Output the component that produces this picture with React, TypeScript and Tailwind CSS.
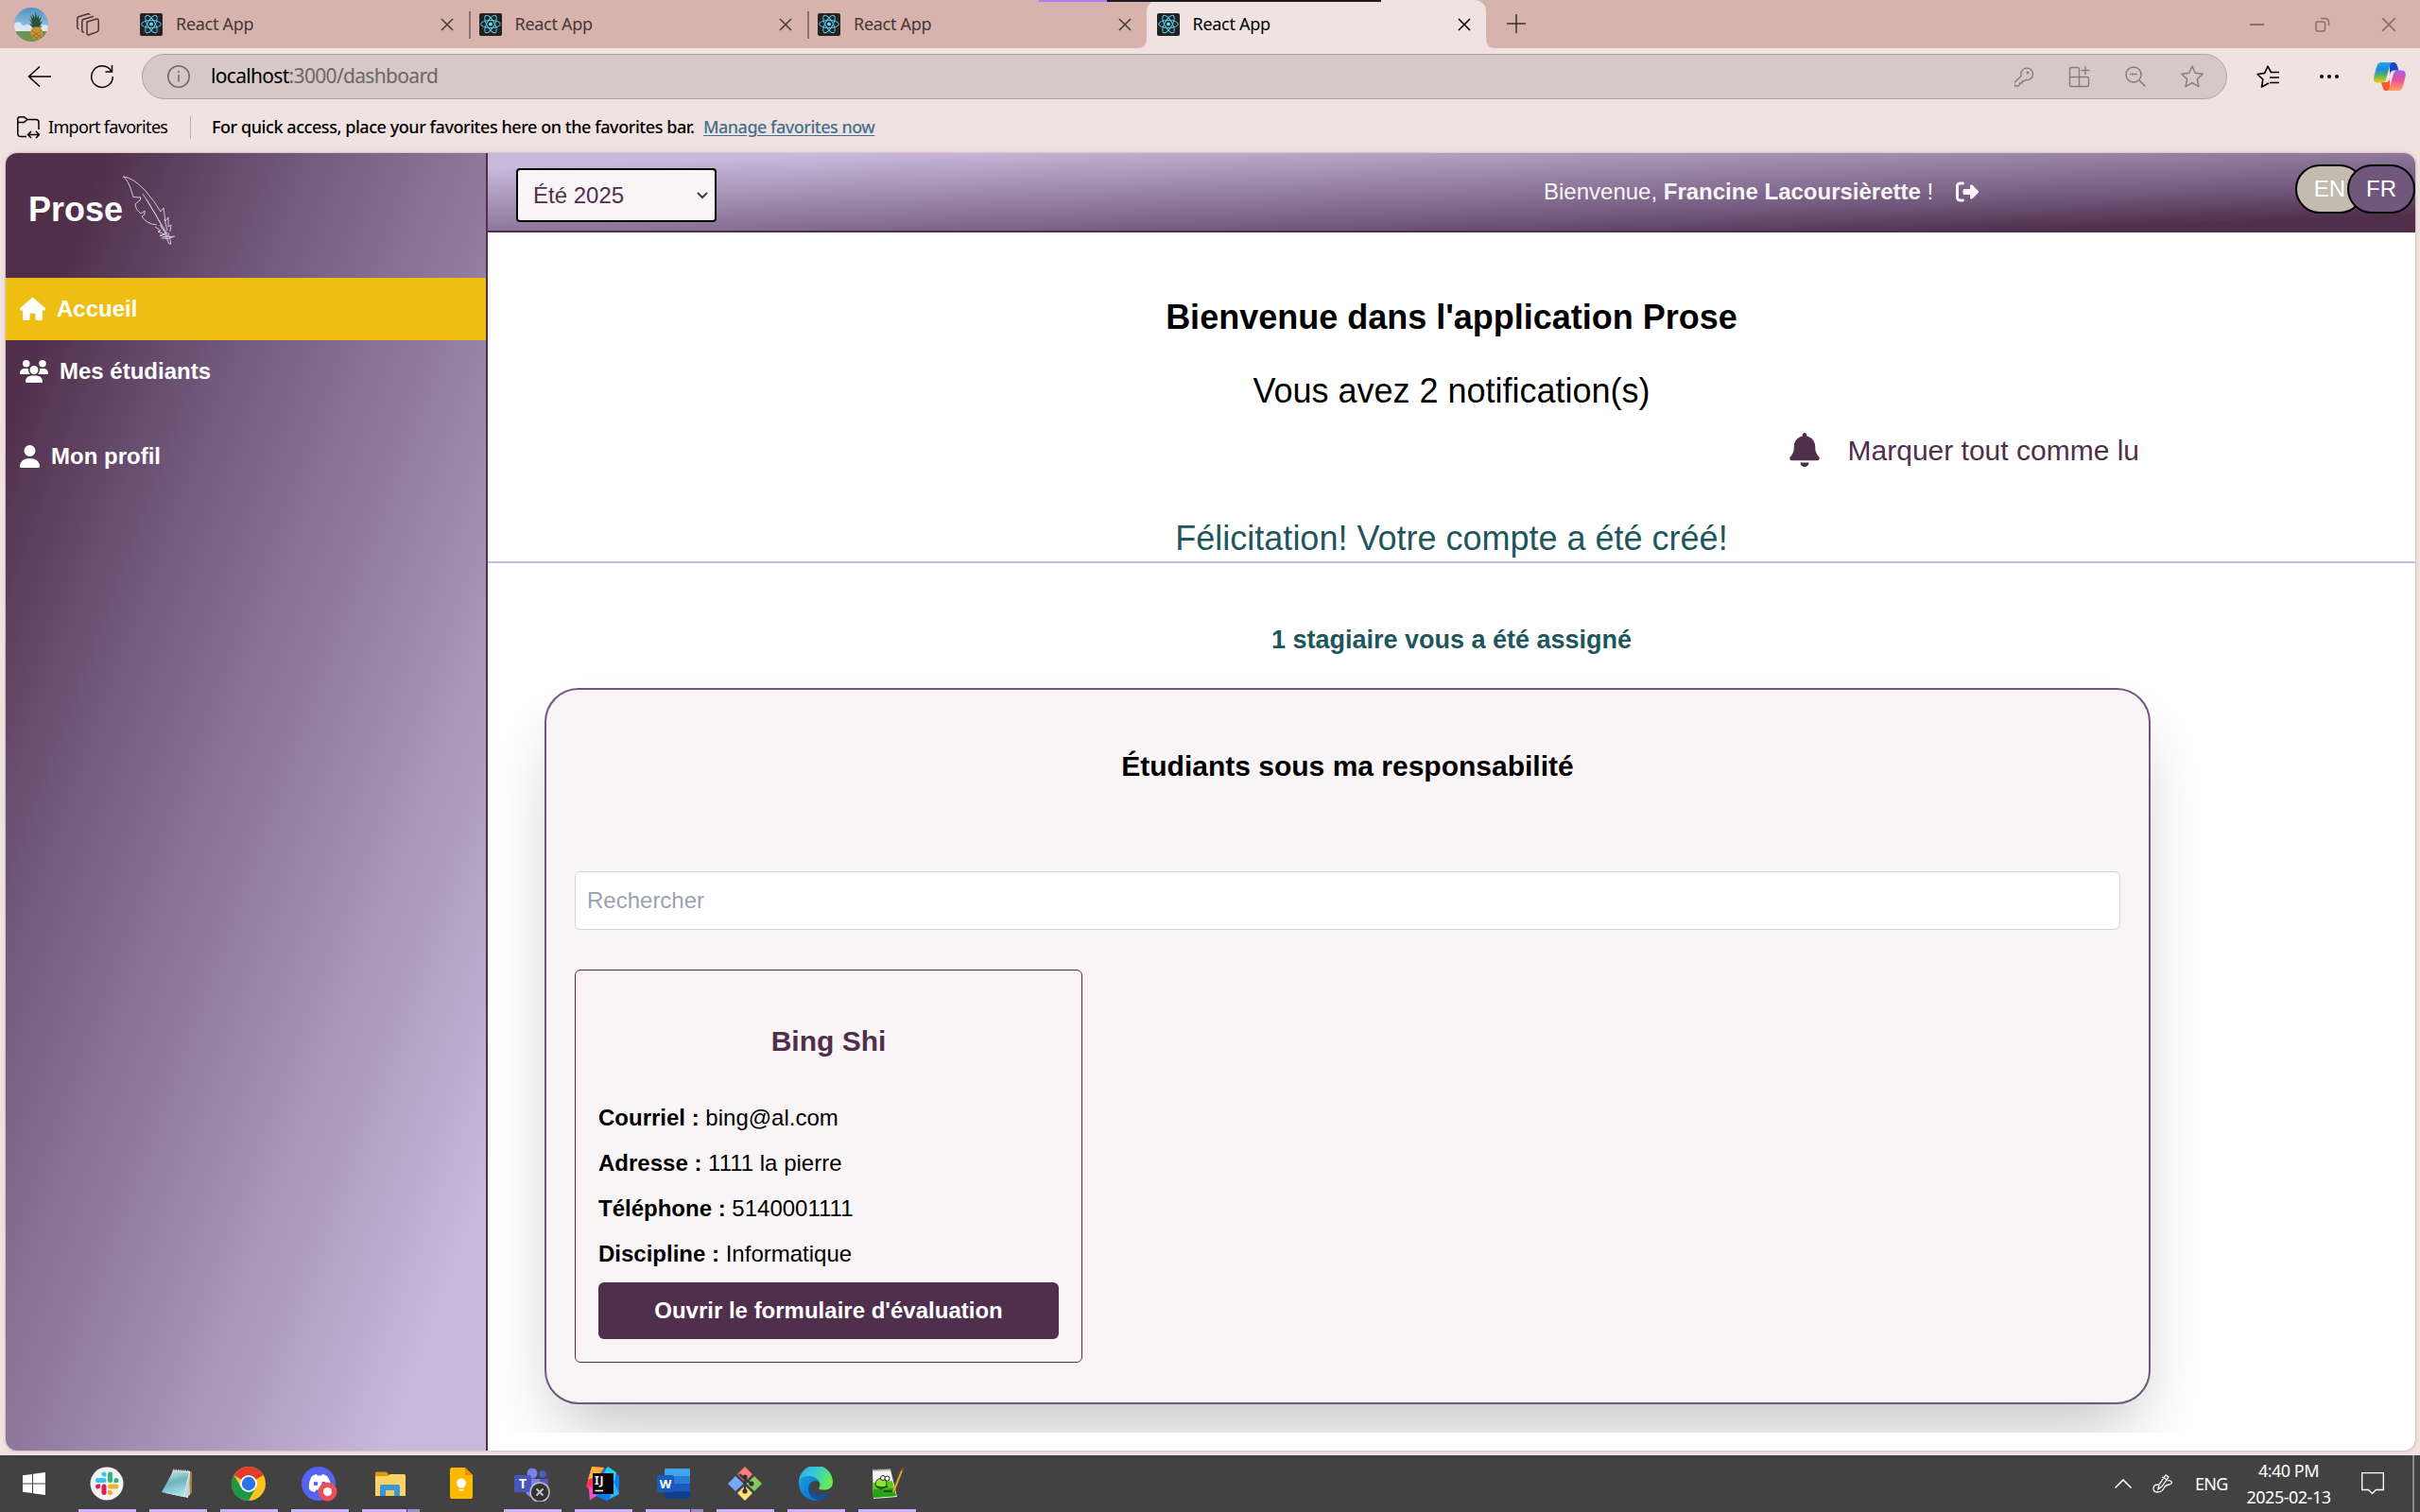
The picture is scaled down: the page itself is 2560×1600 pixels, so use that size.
import React from "react";
import { FaHouse, FaUsers, FaUser, FaBell, FaRightFromBracket } from "react-icons/fa6";

const TABS = [
  { title: "React App", active: false },
  { title: "React App", active: false },
  { title: "React App", active: false },
  { title: "React App", active: true },
];

function ReactFavicon() {
  return (
    <svg className="size-6 shrink-0" viewBox="0 0 24 24" fill="none">
      <rect width="24" height="24" rx="2" fill="#222222" />
      <g stroke="#5ccfee" strokeWidth="1">
        <ellipse cx="12" cy="11.5" rx="10.4" ry="4" />
        <ellipse cx="12" cy="11.5" rx="10.4" ry="4" transform="rotate(60 12 11.5)" />
        <ellipse cx="12" cy="11.5" rx="10.4" ry="4" transform="rotate(120 12 11.5)" />
      </g>
      <circle cx="12" cy="11.5" r="2" fill="#61dafb" />
    </svg>
  );
}

function Avatar() {
  return (
    <svg className="size-9 shrink-0" viewBox="0 0 36 36">
      <defs>
        <clipPath id="av">
          <circle cx="18" cy="18" r="18" />
        </clipPath>
        <linearGradient id="sky" x1="0" y1="0" x2="0" y2="1">
          <stop offset="0" stopColor="#4f93c6" />
          <stop offset="0.7" stopColor="#a5cbe4" />
        </linearGradient>
      </defs>
      <g clipPath="url(#av)">
        <rect width="36" height="36" fill="url(#sky)" />
        <path d="M0 18c3-4 6-3 8 0s5-2 9 1 10-3 19 0v7H0z" fill="#dbe8f1" />
        <rect y="25" width="36" height="11" fill="#6d9350" />
        <path
          d="M20 22l-4-5 3 1-3-6 3 3-2-7 3 4-1-6 3 5 .5-7 2 7 2-4-.5 6 3-4-2 7 3-2-3 6 3-1-4 4z"
          fill="#2b5140"
        />
        <rect x="17.500" y="20.500" width="12.500" height="13" rx="5" fill="#c9953a" />
        <path d="M18 24l11 8M18 29l7 4M29 24l-11 8M29 29l-7 4" stroke="#8d6420" strokeWidth=".8" />
      </g>
    </svg>
  );
}

function CloseX({ className }: { className: string }) {
  return (
    <svg className={className} viewBox="0 0 14 14" fill="none" stroke="currentColor" strokeWidth="1.5">
      <path d="M1 1l12 12M13 1L1 13" />
    </svg>
  );
}

function TabStrip() {
  return (
    <div className="relative flex h-[51px] bg-[#d8b2ac] text-[#453835]">
      <div className="flex w-[137px] items-center pl-[15px]">
        <Avatar />
        <svg className="ml-[30px] size-6" viewBox="0 0 24 24" fill="none" stroke="currentColor" strokeWidth="1.5">
          <path d="M10.5 9.3l10-3.1q2.7-.6 2.7 1.8v9.5q0 1.5-1.3 2.1l-8.5 3.2q-2.4.5-2.4-1.7V11q0-1.200.7-1.700z" />
          <path d="M8 20q-2.200.2-2.200-1.700V8.500q0-1.400 1.400-2L18 3.200" />
          <path d="M2.600 16.800Q.8 16.500.8 14.700V5.700q0-1.500 1.400-2L12 .8q1.600-.3 2 .9" />
        </svg>
      </div>
      {TABS.map((tab, i) => (
        <div
          key={i}
          className={
            tab.active
              ? "relative flex w-[359px] items-center rounded-t-xl bg-[#f0e2e0] pl-[11px] text-black"
              : "relative flex w-[358.5px] items-center pl-[11px]"
          }
        >
          {tab.active && (
            <>
              <svg className="absolute bottom-0 -left-2.5 size-2.5" viewBox="0 0 10 10">
                <path d="M10 0v10H0Q10 10 10 0z" fill="#f0e2e0" />
              </svg>
              <svg className="absolute -right-2.5 bottom-0 size-2.5" viewBox="0 0 10 10">
                <path d="M0 0v10h10Q0 10 0 0z" fill="#f0e2e0" />
              </svg>
            </>
          )}
          <ReactFavicon />
          <span className="ml-[14px] text-[18px] tracking-[-0.3px]">{tab.title}</span>
          <CloseX className="mr-[16px] ml-auto size-[14px]" />
          {i < 2 && <span className="absolute top-3 right-[-2px] h-[29px] w-0.5 bg-[#8d7370]" />}
        </div>
      ))}
      <svg className="mt-[15px] ml-[22px] size-5" viewBox="0 0 20 20" stroke="#3a2f2d" strokeWidth="1.500">
        <path d="M10 0v20M0 10h20" />
      </svg>
      <div className="mr-[25px] ml-auto flex items-center gap-[54px] text-[#8a6f6b]">
        <span className="h-0.5 w-[15px] bg-[#8a6f6b]" />
        <svg className="size-4" viewBox="0 0 16 16" fill="none" stroke="currentColor" strokeWidth="1.500">
          <rect x="1" y="5" width="9.500" height="10" rx="2" />
          <path d="M6 1.500h4q4.500 0 4.500 4.500v3" />
        </svg>
        <CloseX className="size-4" />
      </div>
      <div className="absolute top-0 left-[1099px] flex h-0.5">
        <span className="w-[72px] bg-[#ae7df5]" />
        <span className="w-[290px] bg-[#1f1b1d]" />
      </div>
    </div>
  );
}

function Copilot() {
  return (
    <svg className="h-[30px] w-[34px]" viewBox="0 0 34 30">
      <defs>
        <linearGradient id="cpa" x1="0" y1="0" x2="0" y2="1">
          <stop offset="0" stopColor="#22a8f0" />
          <stop offset="0.35" stopColor="#1e88e0" />
          <stop offset="0.65" stopColor="#55b85c" />
          <stop offset="1" stopColor="#f7c90c" />
        </linearGradient>
        <linearGradient id="cpb" x1="0" y1="0" x2="0" y2="1">
          <stop offset="0" stopColor="#a45bf0" />
          <stop offset="0.5" stopColor="#ee5391" />
          <stop offset="1" stopColor="#ffa35c" />
        </linearGradient>
      </defs>
      <path d="M17 0h4q3 0 4 4l1.500 4.500H22q-4 0-5 4z" fill="#1447c4" />
      <path d="M17 30h-4q-3 0-3.500-4L8 21h5q3 0 4-4z" fill="#f4592f" />
      <path d="M8 0h13q-3 0-4 4l-4 14q-1 3.500-4 3.500H4Q-1.500 21.500.5 14L3 5q1.400-5 5-5z" fill="url(#cpa)" />
      <path d="M26 30H13q3 0 4-4l4-14q1-3.500 4-3.500h4.500q5.500 0 4 7L31 25q-1.400 5-5 5z" fill="url(#cpb)" />
    </svg>
  );
}

function AddressBar() {
  return (
    <div className="flex h-[60px] items-center pl-[29px] text-black">
      <svg className="h-6 w-[26px]" viewBox="0 0 26 24" fill="none" stroke="currentColor" strokeWidth="1.500">
        <path d="M25 12H2M13 1.500L1.500 12 13 22.500" />
      </svg>
      <svg className="ml-[40px] size-[26px]" viewBox="0 0 26 26" fill="none" stroke="currentColor" strokeWidth="1.500">
        <path d="M22.500 7A11.300 11.300 0 1 0 24.300 13M23.500 1v7h-7" />
      </svg>
      <div className="ml-[29px] flex h-12 w-[2206px] items-center rounded-full border border-[#b0a3a1] bg-[#d6c8c6] pr-6 pl-[26px] text-[#6d6664]">
        <svg className="size-6" viewBox="0 0 24 24" fill="none" stroke="currentColor" strokeWidth="1.500">
          <circle cx="12" cy="12" r="11.200" />
          <path d="M12 10v7.500M12 6v2" />
        </svg>
        <span className="ml-[22px] text-[21px] tracking-[-0.68px]">
          <span className="text-black">localhost</span>:3000/dashboard
        </span>
        <div className="ml-auto flex items-center gap-[37px] text-[#857c7a]">
          <svg className="-mr-px size-[21px]" viewBox="0 0 21 21" fill="none" stroke="currentColor" strokeWidth="1.300">
            <path
              d="M1 16.500L8.200 9.300a6.300 6.300 0 1 1 4.600 4.200L11 15H9v2H6.500v1.500L5 20H1z"
              strokeLinejoin="round"
              transform="translate(-1 0)"
            />
            <circle cx="14" cy="6" r=".8" fill="currentColor" />
          </svg>
          <svg className="size-[23px]" viewBox="0 0 23 23" fill="none" stroke="currentColor" strokeWidth="1.400">
            <path d="M11.500 11.500V3q0-1.500-1.500-1.500H3Q1.500 1.500 1.500 3v17q0 1.500 1.500 1.500h17q1.500 0 1.500-1.500v-7q0-1.500-1.500-1.500zM1.500 11.500h10v10M18 0v9M13.500 4.500h9" />
          </svg>
          <svg className="size-[22px]" viewBox="0 0 22 22" fill="none" stroke="currentColor" strokeWidth="1.500">
            <circle cx="9" cy="9" r="8" />
            <path d="M15 15l6.500 6.500M5 8.500h8" />
          </svg>
          <svg className="size-6" viewBox="0 0 24 24" fill="none" stroke="currentColor" strokeWidth="1.400">
            <path
              d="M12 1l3.200 7.300 8 .9-5.900 5.500 1.600 7.900L12 18.700l-6.900 3.900 1.600-7.900L.8 9.200l8-.9z"
              strokeLinejoin="round"
            />
          </svg>
        </div>
      </div>
      <svg className="ml-[31px] size-6" viewBox="0 0 24 24" fill="none" stroke="currentColor" strokeWidth="1.600">
        <path
          d="M13 19l-7.500 4 1.300-8L1 9.500l7.700-1.100L12 1.200l3.400 6.300h8.600M14 13h10M14 18.500h10"
          strokeLinejoin="round"
        />
      </svg>
      <svg className="ml-[43px] h-1 w-5" viewBox="0 0 20 4">
        <circle cx="2" cy="2" r="2" />
        <circle cx="10" cy="2" r="2" />
        <circle cx="18" cy="2" r="2" />
      </svg>
      <div className="ml-[37px]">
        <Copilot />
      </div>
    </div>
  );
}

function FavoritesBar() {
  return (
    <div className="flex h-[51px] items-center pb-1 pl-[18px] text-[18px] text-black">
      <svg className="size-6" viewBox="0 0 24 24" fill="none" stroke="currentColor" strokeWidth="1.500">
        <path d="M10 21.500H4Q.8 21.500.8 18.500V3Q.8.800 3 .8h4.500L11 3.500h9q3 0 3 3V14M.8 6.500h6.500L11 3.500" />
        <path d="M12 19.500h11M15 16l-3.500 3.500L15 23M20 16l3.500 3.500L20 23" />
      </svg>
      <span className="ml-[9px] w-[126px] whitespace-nowrap tracking-[-0.68px]">Import favorites</span>
      <span className="ml-[24px] h-6 w-px bg-[#b8acab]" />
      <span className="ml-[22px] w-[512px] whitespace-nowrap font-medium tracking-[-0.440px]">
        For quick access, place your favorites here on the favorites bar.
      </span>
      <span className="ml-2 whitespace-nowrap font-medium tracking-[-0.5px] text-[#44708f] underline underline-offset-2">
        Manage favorites now
      </span>
    </div>
  );
}

function Feather() {
  return (
    <svg
      className="absolute top-6 left-[123px] h-[74px] w-[58px]"
      viewBox="0 0 58 74"
      fill="none"
      stroke="#e0d6e4"
      strokeWidth="0.9"
      strokeLinejoin="round"
    >
      <path d="M2 1q5 5 7 12l3 9.500 8 .5-1 3-5 4q0 6 6 10l4-3v4l-3 2q5 8 16 9" />
      <path d="M1 .8Q12 2 25 16q10 12 16 22l3-4 2 14 3-4v10l3-2-1 7" />
      <path d="M22 19q14 20 26 46M26 25q10 18 22 36" strokeWidth=".8" />
      <path d="M35 54l6 4-3 1 7 3-5 1q5 3 15 1M42 66q8 2 14-2M45 61l5 11h2l-3-12M40 52l9 12M45 46l3 12" />
    </svg>
  );
}

const NAV = [
  { label: "Accueil", icon: <FaHouse className="h-6 w-[27px]" />, cls: "bg-[#eebf12]" },
  { label: "Mes étudiants", icon: <FaUsers className="h-6 w-[30px]" />, cls: "" },
  { label: "Mon profil", icon: <FaUser className="h-6 w-[21px]" />, cls: "mt-6" },
];

function Sidebar() {
  return (
    <aside className="w-[510px] shrink-0 border-r-2 border-[#502f4c] bg-[linear-gradient(to_bottom_right,#502f4a_10%,#70587c_30%,#c8b8db_90%)] text-white">
      <div className="relative h-[132px] pt-9 pl-6">
        <span className="text-[36px] leading-[48px] font-bold">Prose</span>
        <Feather />
      </div>
      <nav>
        {NAV.map((item) => (
          <a key={item.label} className={`flex h-[66px] items-center gap-3 pl-[15px] text-[24px] font-bold ${item.cls}`}>
            {item.icon}
            {item.label}
          </a>
        ))}
      </nav>
    </aside>
  );
}

function Header() {
  return (
    <header className="flex h-[84px] border-b-2 border-[#502f4c] bg-[linear-gradient(to_top_left,#502f4a_10%,#70587c_30%,#c8b8db_90%)] text-[24px]">
      <div className="mt-4 ml-[30px] flex h-[57px] w-[212px] items-center justify-between rounded-[4px] border-2 border-black bg-[#f9f4f6] pr-[7px] pl-[16px] text-[#502f4c]">
        Été 2025
        <svg className="h-2 w-3" viewBox="0 0 12 8" fill="none" stroke="currentColor" strokeWidth="2">
          <path d="M1 1l5 5 5-5" />
        </svg>
      </div>
      <div className="ml-[875px] flex h-[82px] items-center whitespace-pre text-[#f9f4f6]">
        Bienvenue, <b>Francine Lacoursièrette</b> !
        <FaRightFromBracket className="ml-6 size-6" />
      </div>
      <div className="mt-3 ml-auto flex text-white">
        <span className="flex h-[52px] items-center rounded-full border-2 border-black bg-[#c4bbb0] px-[18px]">EN</span>
        <span className="z-10 -ml-[18px] flex h-[52px] items-center rounded-full border-2 border-black bg-[#70587c] px-[18px]">
          FR
        </span>
      </div>
    </header>
  );
}

const DETAILS = [
  ["Courriel :", "bing@al.com"],
  ["Adresse :", "1111 la pierre"],
  ["Téléphone :", "5140001111"],
  ["Discipline :", "Informatique"],
];

function StudentCard() {
  return (
    <div className="mt-[42px] flex h-[416px] w-[537px] flex-col rounded-md border border-[#502f4c] px-6 text-[24px] text-black">
      <h3 className="mt-[54px] text-center text-[30px] leading-[42px] font-bold text-[#502f4c]">Bing Shi</h3>
      <div className="mt-[36px]">
        {DETAILS.map(([k, v]) => (
          <p key={k} className="leading-[48px]">
            <b>{k}</b> {v}
          </p>
        ))}
      </div>
      <button className="mt-[6px] h-[60px] rounded-md bg-[#502f4c] font-bold text-white">
        Ouvrir le formulaire d'évaluation
      </button>
    </div>
  );
}

function Main() {
  return (
    <main className="h-[1270px] overflow-hidden text-center text-black">
      <h1 className="pt-[66px] text-[36px] leading-[48px] font-bold">Bienvenue dans l'application Prose</h1>
      <p className="mt-[30px] text-[36px] leading-[48px]">Vous avez 2 notification(s)</p>
      <div className="mt-4 flex h-[44px] items-center justify-end pr-[292px] text-[30px] text-[#502f4c]">
        <FaBell className="mr-[30px] h-9 w-[32px]" />
        Marquer tout comme lu
      </div>
      <div className="mt-[47px] border-b-2 border-[#c8b8db] text-[36px] leading-[49px] text-[#1d565c]">
        Félicitation! Votre compte a été créé!
      </div>
      <p className="mt-[60px] text-[27px] leading-[42px] font-bold text-[#1d565c]">1 stagiaire vous a été assigné</p>
      <section className="mt-[30px] ml-[60px] h-[758px] w-[1699px] rounded-[36px] border-2 border-[#70587c] bg-[#f9f4f6] px-[30px] shadow-[0_37.5px_75px_-18px_rgba(0,0,0,0.25)]">
        <h2 className="pt-[60px] text-[30px] leading-[42px] font-bold">Étudiants sous ma responsabilité</h2>
        <div className="mt-[90px] flex h-[62px] items-center rounded-md border border-[#d1d5db] bg-white px-[12px] text-[24px] text-[#9ca3af]">
          Rechercher
        </div>
        <div className="text-left">
          <StudentCard />
        </div>
      </section>
    </main>
  );
}

const ICON = "size-9";

function Windows() {
  return (
    <svg className="size-6" viewBox="0 0 24 24" fill="#fff">
      <path d="M0 3.300L10 2v9.500H0zM11 1.800L24 0v11.500H11zM0 12.500h10V22L0 20.700zM11 12.500h13V24L11 22.200z" />
    </svg>
  );
}

function Slack() {
  return (
    <svg className={ICON} viewBox="0 0 36 36">
      <circle cx="18" cy="18" r="17.500" fill="#f6f4f5" />
      <g fill="#36c5f0">
        <rect x="6" y="12" width="11.500" height="5" rx="2.500" />
        <path d="M17.500 10.500H15A2.500 2.500 0 1 1 17.500 8z" />
      </g>
      <g fill="#2eb67d">
        <rect x="19" y="5.500" width="5" height="11.500" rx="2.500" />
        <path d="M25.500 17v-2.500A2.500 2.500 0 1 1 28 17z" />
      </g>
      <g fill="#ecb22e">
        <rect x="19" y="18.500" width="11.500" height="5" rx="2.500" />
        <path d="M19 25h2.500a2.500 2.500 0 1 1-2.500 2.500z" />
      </g>
      <g fill="#e01e5a">
        <rect x="12.500" y="18.500" width="5" height="11.500" rx="2.500" />
        <path d="M11 18.500V21a2.500 2.500 0 1 1-2.500-2.500z" />
      </g>
    </svg>
  );
}

function Notepad() {
  return (
    <svg className={ICON} viewBox="0 0 36 36">
      <defs>
        <linearGradient id="np" x1="0" y1="0" x2="0.3" y2="1">
          <stop offset="0" stopColor="#dcecef" />
          <stop offset="0.5" stopColor="#6fb3c0" />
          <stop offset="1" stopColor="#a8e0e8" />
        </linearGradient>
      </defs>
      <path d="M30 4l3 2v22l-6 3z" fill="#a8803c" />
      <path d="M13 4l18 1-2 28-24-5z" fill="#e9eef0" />
      <path d="M13 5l17 1-6 26L1 27z" fill="url(#np)" />
      <path d="M13 4l17 1.500" stroke="#d0d4d6" strokeWidth="3" strokeDasharray="1.500 1" />
      <path d="M30 8l-5 24 6-2z" fill="#c9d4d8" />
    </svg>
  );
}

function Chrome() {
  return (
    <svg className={ICON} viewBox="0 0 36 36">
      <circle cx="18" cy="18" r="18" fill="#fcc31e" />
      <path d="M18 18L2.400 9A18 18 0 0 1 33.600 9z" fill="#e33b2e" />
      <path d="M18 18l7.800 4.500L18 36A18 18 0 0 1 2.400 9l7.800 13.500z" fill="#1e9648" />
      <circle cx="18" cy="18" r="9" fill="#fff" />
      <circle cx="18" cy="18" r="7.200" fill="#2a74e8" />
    </svg>
  );
}

function Discord() {
  return (
    <svg className="h-[38px] w-[38px]" viewBox="0 0 38 38">
      <circle cx="18" cy="19" r="18" fill="#5662f0" />
      <path
        d="M11 11q3-2 5-2l1 1.500h4L22 9q3 .3 5 2 5 7 4 14-3 3-6 3l-1.500-2.500h-8L14 28q-4-.500-6-3-1-8 3-14z"
        fill="#fff"
      />
      <circle cx="15" cy="19" r="2.300" fill="#5662f0" />
      <circle cx="23.500" cy="19" r="2.300" fill="#5662f0" />
      <circle cx="27.500" cy="27.500" r="10" fill="#ee4f56" />
      <circle cx="27.500" cy="27.500" r="4.500" fill="#fff" />
    </svg>
  );
}

function Explorer() {
  return (
    <svg className={ICON} viewBox="0 0 36 36">
      <path d="M2 7q0-1.500 1.500-1.500h10L17 9v5H2z" fill="#d99a07" />
      <path d="M2 10h13l3-2h14.500Q34 8 34 9.500V31H2z" fill="#fbd267" />
      <path d="M7 31V21q0-2 2-2h17q2 0 2 2v10h-6v-6h-9v6z" fill="#3b96da" />
      <path d="M13 25h9v6h-9z" fill="#f4c855" />
    </svg>
  );
}

function Keep() {
  return (
    <svg className={ICON} viewBox="0 0 36 36">
      <path d="M8 1h14l8 8v23q0 2-2 2H8q-2 0-2-2V3q0-2 2-2z" fill="#fdb900" />
      <path d="M22 1l8 8h-8z" fill="#f08c00" />
      <circle cx="18" cy="17.500" r="5" fill="#fff" />
      <path d="M15.500 20h5v2.500h-5zM15.500 24h5v1.500h-5z" fill="#fff" />
    </svg>
  );
}

function Teams() {
  return (
    <svg className="h-[38px] w-[38px]" viewBox="0 0 38 38">
      <circle cx="19" cy="8" r="5.500" fill="#7b83eb" />
      <circle cx="30" cy="9" r="3.800" fill="#5059c9" />
      <path d="M25 14h11v9q0 5-5 5h-6z" fill="#5059c9" />
      <path d="M12 14h15v12q0 7-7 7.500-8-.500-8-7.500z" fill="#7b83eb" />
      <rect x="0" y="10" width="18" height="18" rx="1.500" fill="#4b53bc" />
      <text x="9" y="24" fill="#fff" fontSize="14" fontWeight="700" textAnchor="middle">
        T
      </text>
      <circle cx="27" cy="28" r="10" fill="#333" stroke="#b9b9b9" strokeWidth="1.600" />
      <path d="M23.500 24.500l7 7M30.500 24.500l-7 7" stroke="#c8c8c8" strokeWidth="1.800" />
    </svg>
  );
}

function IntelliJ() {
  return (
    <svg className={ICON} viewBox="0 0 36 36">
      <path d="M6 0l13 1 4 17-19 18-1-12-3-3 2-7z" fill="#fe315d" />
      <path d="M6 0l13 1-6 8-11 5z" fill="#fcb53c" />
      <path d="M18 4l5-4 12 10v19l-13 7-15-6z" fill="#087cfa" />
      <path d="M23 0l9 6-2 10-12-8z" fill="#21d2f0" />
      <path d="M3 20l6 4 2 7-7 4z" fill="#f44bd0" />
      <path d="M29 15l6 14-10 5z" fill="#36b3f5" />
      <rect x="7" y="7" width="22" height="22" fill="#0b0608" />
      <text x="9" y="18.500" fill="#fff" fontSize="12" fontWeight="700" letterSpacing="0.800">
        IJ
      </text>
      <path d="M9.500 25.500h8.500" stroke="#fff" strokeWidth="1.600" />
    </svg>
  );
}

function Word() {
  return (
    <svg className={ICON} viewBox="0 0 36 36">
      <rect x="8" y="2" width="27" height="32" rx="2" fill="#2b7cd3" />
      <path d="M10 2h23q2 0 2 2v6H8V4q0-2 2-2z" fill="#41a5ee" />
      <path d="M8 18h27v8H8z" fill="#185abd" />
      <path d="M8 26h27v6q0 2-2 2H10q-2 0-2-2z" fill="#103f91" />
      <rect x="0" y="9" width="18" height="18" rx="1.500" fill="#185abd" />
      <text x="9" y="22.500" fill="#fff" fontSize="13" fontWeight="700" textAnchor="middle">
        W
      </text>
    </svg>
  );
}

function Git() {
  return (
    <svg className={ICON} viewBox="0 0 36 36">
      <path d="M18 0l8 8-8 8.500L10 8z" fill="#f97d7a" />
      <path d="M28 10l8 8-8 8-8.500-8z" fill="#82cd58" />
      <path d="M18 20l8 8-8 8-8-8z" fill="#fbe27a" />
      <path d="M8 10l8.500 8L8 26l-8-8z" fill="#7aa9fa" />
      <path d="M12 8l6 5v14M18 13l8 6" stroke="#3c3c3c" strokeWidth="2.400" fill="none" />
      <circle cx="18" cy="11" r="2.600" fill="#333" />
      <circle cx="18" cy="26" r="2.600" fill="#333" />
      <circle cx="25" cy="18" r="2.600" fill="#333" />
    </svg>
  );
}

function Edge() {
  return (
    <svg className={ICON} viewBox="0 0 36 36">
      <defs>
        <linearGradient id="eg1" x1="0" y1="0" x2="1" y2="0.4">
          <stop offset="0" stopColor="#2fa9e6" />
          <stop offset="0.5" stopColor="#37c8d8" />
          <stop offset="1" stopColor="#66ea5a" />
        </linearGradient>
        <linearGradient id="eg2" x1="0" y1="0" x2="1" y2="1">
          <stop offset="0" stopColor="#1b9de2" />
          <stop offset="1" stopColor="#0b67c4" />
        </linearGradient>
      </defs>
      <path d="M0 17A18 18 0 0 1 36 16q0 8-8 8.500-6 .200-7-1.500 3-4 0-8Q14 8 0 17z" fill="url(#eg1)" />
      <path d="M0 17q1-6 9-7 10-.500 13 7-5-4-9 0-6 8 4 14 3 2 8 3.500Q18 37 12 35 0 30 0 17z" fill="url(#eg2)" />
      <path d="M14.500 15.500q-5 5 0 11 7 6 18.500.5Q30 33 24 35.200q-8 .5-12.500-6-4-9 3-13.700z" fill="#134f9c" />
    </svg>
  );
}

function NotepadPP() {
  return (
    <svg className={ICON} viewBox="0 0 36 36">
      <path d="M3 4l19-1 7 29-25 2z" fill="#f3f6f4" />
      <path d="M3 17l21-2 4 16-24 2z" fill="#5fc81e" />
      <path d="M4 24l22-1 2 8-24 2z" fill="#27a315" />
      <path d="M3 4l20-.5" stroke="#b4b4b4" strokeWidth="2.500" strokeDasharray="1.500 1" />
      <ellipse cx="12" cy="18" rx="6" ry="5.500" fill="#8ee234" stroke="#174d10" />
      <circle cx="14" cy="12" r="2.500" fill="#fff" stroke="#222" />
      <circle cx="18.500" cy="12.500" r="2.500" fill="#fff" stroke="#222" />
      <path d="M7 21q6 2 12 0M15 26h9" stroke="#163f10" strokeWidth="1.500" fill="none" />
      <path d="M34 2l1.500 1-9 23-2 2v-3z" fill="#eba52a" />
      <path d="M34 1l2 1-1 3-2-1z" fill="#b23c2c" />
    </svg>
  );
}

const TASKS: { icon: React.ReactNode; state: "run" | "multi" | "idle" }[] = [
  { icon: <Slack />, state: "run" },
  { icon: <Notepad />, state: "run" },
  { icon: <Chrome />, state: "run" },
  { icon: <Discord />, state: "run" },
  { icon: <Explorer />, state: "multi" },
  { icon: <Keep />, state: "idle" },
  { icon: <Teams />, state: "run" },
  { icon: <IntelliJ />, state: "run" },
  { icon: <Word />, state: "multi" },
  { icon: <Git />, state: "run" },
  { icon: <Edge />, state: "run" },
  { icon: <NotepadPP />, state: "run" },
];

function Taskbar() {
  return (
    <footer className="flex h-[60px] bg-[#424242] text-white">
      <div className="flex w-[75px] items-center pl-6">
        <Windows />
      </div>
      {TASKS.map((t, i) => (
        <div key={i} className="relative flex w-[75px] items-center justify-center">
          {t.icon}
          {t.state !== "idle" && (
            <div className="absolute bottom-0 left-2 flex h-[3px] w-[61px] gap-px">
              <span className="flex-1 bg-[#ccb0fc]" />
              {t.state === "multi" && <span className="w-[13px] bg-[#a28dc6]" />}
            </div>
          )}
        </div>
      ))}
      <div className="ml-auto flex items-center text-[18px]">
        <svg className="h-[10px] w-[18px]" viewBox="0 0 18 10" fill="none" stroke="#fff" strokeWidth="1.500">
          <path d="M.5 9.500L9 1l8.500 8.500" />
        </svg>
        <svg className="ml-[22px] size-[21px]" viewBox="0 0 21 21" fill="none" stroke="#fff" strokeWidth="1.300">
          <path d="M6 16l1-5 7-10 3 2-7 10-4 3zM10 3l6 3M6 11q-5 0-5 4t4 4q5 0 7-4t6-4q3-1 2-3t-4-1" />
        </svg>
        <span className="ml-[24px] w-[33px] tracking-[-0.7px]">ENG</span>
        <div className="ml-[19px] w-[94px] text-center leading-[28px] whitespace-nowrap">
          <div className="tracking-[-0.5px]">4:40 PM</div>
          <div className="tracking-[-0.5px]">2025-02-13</div>
        </div>
        <svg className="ml-[30px] size-6" viewBox="0 0 24 24" fill="none" stroke="#fff" strokeWidth="1.300">
          <path d="M.7.700h22.600v17.800H15.500L11.500 22.500 7.500 18.500H.7z" />
        </svg>
        <span className="mr-[6px] ml-[30px] h-[60px] w-0.5 bg-[#8b8b8b]" />
      </div>
    </footer>
  );
}

export default function App() {
  return (
    <div className="flex h-[1600px] w-[2560px] flex-col overflow-hidden bg-[#f0e2e0] font-['Noto_Sans',sans-serif]">
      <TabStrip />
      <AddressBar />
      <FavoritesBar />
      <div className="mr-[5px] mb-[5px] ml-[6px] flex h-[1373px] overflow-hidden rounded-xl bg-white font-['Liberation_Sans',Arial,sans-serif] shadow-[0_0_3px_rgba(120,80,80,0.5)]">
        <Sidebar />
        <div className="w-[2039px]">
          <Header />
          <Main />
        </div>
      </div>
      <Taskbar />
    </div>
  );
}
